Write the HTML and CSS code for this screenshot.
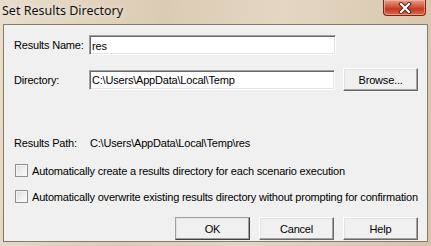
FILE: index.html
```html
<!DOCTYPE html>
<html lang="en">
<head>
    <meta charset="UTF-8">
    <title>Set Results Directory</title>
    <link rel="stylesheet" href="styles.css">
</head>
<body>
    <div class="window">
        <div class="titlebar">
            <span class="title">Set Results Directory</span>
            <button class="close" aria-label="Close">
                <svg width="16" height="12" viewBox="0 0 16 12">
                    <path d="M4 2 L12 10 M12 2 L4 10" stroke="#4a2a20" stroke-width="4" stroke-linecap="square"/>
                    <path d="M4 2 L12 10 M12 2 L4 10" stroke="#ffffff" stroke-width="2" stroke-linecap="square"/>
                </svg>
            </button>
        </div>

        <div class="client">
            <div class="row name-row">
                <label class="label">Results Name:</label>
                <input class="field" type="text" value="res">
            </div>

            <div class="row dir-row">
                <label class="label">Directory:</label>
                <input class="field" type="text" value="C:\Users\AppData\Local\Temp">
                <button class="button browse">Browse...</button>
            </div>

            <div class="row path-row">
                <span class="label">Results Path:</span>
                <span class="path">C:\Users\AppData\Local\Temp\res</span>
            </div>

            <label class="check first">
                <span class="box"></span>
                Automatically create a results directory for each scenario execution
            </label>
            <label class="check">
                <span class="box"></span>
                Automatically overwrite existing results directory without prompting for confirmation
            </label>

            <div class="actions">
                <button class="button default">OK</button>
                <button class="button">Cancel</button>
                <button class="button">Help</button>
            </div>
        </div>
    </div>
</body>
</html>
```

FILE: styles.css
```css
body {
    margin: 0;
    width: 431px;
    height: 246px;
    overflow: hidden;
    font-family: 'Liberation Sans', Arial, sans-serif;
    font-size: 11px;
    letter-spacing: -0.2px;
    color: #000;
}

.window {
    height: 246px;
    box-sizing: border-box;
    padding: 0 3px 4px 3px;
    background: linear-gradient(100deg, #e9ddcc 0%, #dccbb4 35%, #e4d6c2 60%, #d6c3a9 100%);
}

.titlebar {
    height: 24px;
    display: flex;
    align-items: flex-start;
    justify-content: space-between;
}

.title {
    margin-left: -1px;
    font-family: 'Noto Sans', 'Open Sans', sans-serif;
    font-size: 12.5px;
    letter-spacing: 0;
    line-height: 22px;
    color: #111;
    text-shadow: 0 0 6px rgba(255, 255, 255, 0.8);
}

.close {
    width: 43px;
    height: 16px;
    margin-right: 2px;
    padding: 0;
    display: flex;
    align-items: center;
    justify-content: center;
    border: 1px solid #6e2a1c;
    border-top: none;
    border-radius: 0 0 4px 4px;
    background: linear-gradient(#e4a08c 0%, #d2553d 45%, #c43a22 60%, #dc6c4e 100%);
    box-shadow: inset 0 0 0 1px rgba(255, 200, 180, 0.5);
}

.client {
    height: 218px;
    box-sizing: border-box;
    border: 1px solid #857a6c;
    background: #f0f0f0;
    padding: 10px 9px 0 10px;
    white-space: nowrap;
}

.row {
    display: flex;
    align-items: center;
}

.label {
    width: 75px;
    flex: none;
}

.field {
    width: 247px;
    height: 20px;
    box-sizing: border-box;
    margin: 0;
    padding: 1px 2px 0;
    font: inherit;
    letter-spacing: inherit;
    background: #fff;
    border: 1px solid;
    border-color: #a0a0a0 #ffffff #ffffff #a0a0a0;
    box-shadow: inset 1px 1px 0 #696969, inset -1px -1px 0 #e3e3e3;
    outline: none;
}

.name-row {
    height: 20px;
}

.dir-row {
    height: 23px;
    margin-top: 13px;
}

.button {
    width: 75px;
    height: 23px;
    padding: 0;
    font: inherit;
    letter-spacing: inherit;
    color: #000;
    background: #f0f0f0;
    border: 1px solid;
    border-color: #ffffff #696969 #696969 #ffffff;
    box-shadow: inset -1px -1px 0 #a0a0a0, inset 1px 1px 0 #e3e3e3;
}

.button.default {
    border-color: #a0a0a0 #404040 #404040 #a0a0a0;
}

.browse {
    margin-left: 8px;
}

.path-row {
    height: 15px;
    margin-top: 44px;
}

.path {
    padding-left: 1px;
}

.check {
    display: flex;
    align-items: center;
    height: 15px;
    margin-top: 11px;
    padding-left: 1px;
}

.check.first {
    margin-top: 13px;
}

.box {
    width: 13px;
    height: 13px;
    box-sizing: border-box;
    margin-right: 4px;
    border: 1px solid #8e8f8f;
    background: linear-gradient(135deg, #dcdcdc, #ffffff);
    box-shadow: inset 0 0 0 1px #f4f4f4;
}

.actions {
    display: flex;
    justify-content: flex-end;
    gap: 9px;
    margin-top: 13px;
}
```
